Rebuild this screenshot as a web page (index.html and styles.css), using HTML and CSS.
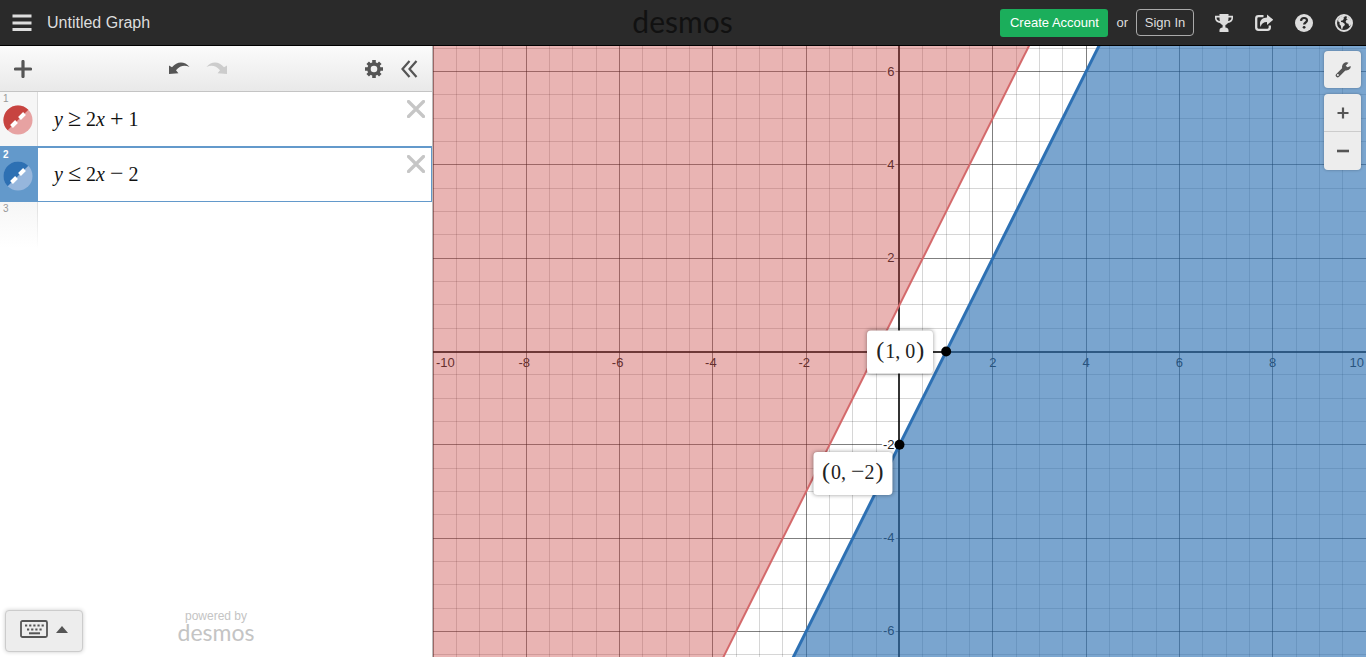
FILE: index.html
```
<!DOCTYPE html>
<html lang="en">
<head>
    <meta charset="UTF-8">
    <meta name="viewport" content="width=device-width, initial-scale=1.0">
    <title>Untitled Graph</title>
    <link rel="stylesheet" href="styles.css">
</head>
<body>
    <header class="header">
        <div class="header-left">
            <button type="button" class="icon-btn" aria-label="Menu">
                <svg width="20" height="18" viewBox="0 0 20 18"><path d="M.5 2h19M.5 9h19M.5 15.500h19" stroke="#ddd" stroke-width="2.800"/></svg>
            </button>
            <span class="graph-title">Untitled Graph</span>
        </div>
        <div class="logo">desmos</div>
        <div class="header-right">
            <button type="button" class="create-account">Create Account</button>
            <span class="or">or</span>
            <button type="button" class="sign-in">Sign In</button>
            <div class="header-icons">
                <button type="button" class="icon-btn" aria-label="Trophy">
                    <svg width="18" height="18" viewBox="0 0 18 18">
                        <path d="M4.500 0h9v1.800H18v2.400c0 2.600-2.200 4.300-5 4.700-.7 1.100-1.600 1.800-2.600 2.200v2.400c1.800.2 2.900 1 3.100 2.400V18h-9v-2.100c.2-1.400 1.300-2.200 3.100-2.400v-2.400C6.600 10.700 5.700 10 5 8.900 2.200 8.500 0 6.800 0 4.200V1.800h4.500z" fill="#ddd"/>
                        <path d="M1.600 3.400h2.900c0 1.400.1 2.700.4 3.700C3 6.700 1.600 5.700 1.600 4.200zM16.400 3.400h-2.900c0 1.400-.1 2.700-.4 3.700 1.900-.4 3.300-1.400 3.300-2.900z" fill="#2a2a2a"/>
                    </svg>
                </button>
                <button type="button" class="icon-btn" aria-label="Share">
                    <svg width="18" height="18" viewBox="0 0 18 18">
                        <path d="M8.500 2.200H3.500Q1.200 2.200 1.200 4.500v9Q1.200 15.800 3.500 15.800h9q2.300 0 2.300-2.300V11.500" fill="none" stroke="#ddd" stroke-width="2.300"/>
                        <path d="M12 .5l6.300 5.300L12 11V8C8.500 8 6.400 9.500 5.600 13 3.600 7.500 6.500 3.600 12 3.400z" fill="#ddd"/>
                    </svg>
                </button>
                <button type="button" class="icon-btn" aria-label="Help">
                    <svg width="18" height="18" viewBox="0 0 18 18">
                        <circle cx="9" cy="9" r="9" fill="#ddd"/>
                        <path d="M6 6.900C6.100 4.900 7.300 4 9 4c1.800 0 3 1 3 2.500 0 2-2.900 2-2.900 4.100" fill="none" stroke="#2a2a2a" stroke-width="2.200"/>
                        <circle cx="9.100" cy="13.300" r="1.400" fill="#2a2a2a"/>
                    </svg>
                </button>
                <button type="button" class="icon-btn" aria-label="Language">
                    <svg width="18" height="18" viewBox="0 0 18 18">
                        <circle cx="9" cy="9" r="8" fill="none" stroke="#ddd" stroke-width="2"/>
                        <path d="M3 5.500L5.500 2.500 9 1.500l1 1.300-1.700.9.700 1.100-1.500 1.700-1.600.3.200 1.200 1.600.3 2.200 1.700-.4 1.600-1.500 1.200-.7 2.300-1-.4-.5-3-1.300-1.500.1-1.900L3.300 7.500zM12 2.500l3 2 1.500 3.500-.8 3.200-1.600 1.100-.7-2.500-1.800-.5-1-1.700.9-1.500 1.500-.5-1.600-.7z" fill="#ddd"/>
                    </svg>
                </button>
            </div>
        </div>
    </header>

    <main class="main">
        <section class="panel">
            <div class="toolbar">
                <button type="button" class="icon-btn" aria-label="Add item">
                    <svg width="18" height="18" viewBox="0 0 18 18"><path d="M9 1.500v15M1.500 9h15" stroke="#555" stroke-width="3.200" stroke-linecap="round"/></svg>
                </button>
                <div class="history">
                    <button type="button" class="icon-btn" aria-label="Undo">
                        <svg width="21" height="13" viewBox="0 0 21 13"><path d="M0 3.500l3 1.800C8-.8 15.500-1 20.500 5 15.500 2.800 11 3.700 7 8.300l2.400 2.900L0 12z" fill="#555"/></svg>
                    </button>
                    <button type="button" class="icon-btn" aria-label="Redo" disabled>
                        <svg width="21" height="13" viewBox="0 0 21 13"><path d="M21 3.500l-3 1.800C13-.8 5.500-1 .5 5 5.500 2.800 10 3.700 14 8.300l-2.400 2.900L21 12z" fill="#ccc"/></svg>
                    </button>
                </div>
                <div class="toolbar-right">
                    <button type="button" class="icon-btn" aria-label="Settings">
                        <svg width="18" height="18" viewBox="0 0 18 18">
                            <g stroke="#555" stroke-width="3.600"><path d="M9 0v18M0 9h18M2.700 2.700l12.600 12.600M15.300 2.700L2.700 15.300"/></g>
                            <circle cx="9" cy="9" r="6.800" fill="#555"/>
                            <circle cx="9" cy="9" r="3.300" fill="#f0f0f0"/>
                        </svg>
                    </button>
                    <button type="button" class="icon-btn" aria-label="Hide list">
                        <svg width="17" height="18" viewBox="0 0 17 18"><path d="M8.500 1L1.500 9l7 8M15.500 1l-7 8 7 8" fill="none" stroke="#555" stroke-width="2.200"/></svg>
                    </button>
                </div>
            </div>

            <div class="row">
                <div class="tab">
                    <span class="num">1</span>
                    <button type="button" class="icon-btn swatch" aria-label="Hide expression 1">
                        <svg width="30" height="30" viewBox="0 0 30 30">
                            <circle cx="15" cy="15" r="14.500" fill="#e7a2a2"/>
                            <path d="M4.700 25.300A14.500 14.500 0 0 1 25.300 4.700z" fill="#c74440"/>
                            <path d="M8.500 21.500l5-5M16.500 13.500l5-5" stroke="#fff" stroke-width="4"/>
                        </svg>
                    </button>
                </div>
                <div class="math" contenteditable="true" role="textbox" aria-label="Expression 1"><i>y</i><span class="op">≥</span>2<i>x</i><span class="op">+</span>1</div>
                <button type="button" class="icon-btn close" aria-label="Delete expression 1">
                    <svg width="18" height="18" viewBox="0 0 18 18"><path d="M1.500 1.500l15 15M16.500 1.500l-15 15" stroke="#c6c6c6" stroke-width="3.200" stroke-linecap="round"/></svg>
                </button>
            </div>
            <div class="row selected">
                <div class="tab">
                    <span class="num">2</span>
                    <button type="button" class="icon-btn swatch" aria-label="Hide expression 2">
                        <svg width="30" height="30" viewBox="0 0 30 30">
                            <circle cx="15" cy="15" r="14.500" fill="#96b6dc"/>
                            <path d="M4.700 25.300A14.500 14.500 0 0 1 25.300 4.700z" fill="#2d70b3"/>
                            <path d="M8.500 21.500l5-5M16.500 13.500l5-5" stroke="#fff" stroke-width="4"/>
                        </svg>
                    </button>
                </div>
                <div class="math" contenteditable="true" role="textbox" aria-label="Expression 2"><i>y</i><span class="op">≤</span>2<i>x</i><span class="op">−</span>2</div>
                <button type="button" class="icon-btn close" aria-label="Delete expression 2">
                    <svg width="18" height="18" viewBox="0 0 18 18"><path d="M1.500 1.500l15 15M16.500 1.500l-15 15" stroke="#c6c6c6" stroke-width="3.200" stroke-linecap="round"/></svg>
                </button>
            </div>
            <div class="row empty">
                <div class="tab"><span class="num">3</span></div>
            </div>

            <div class="panel-footer">
                <button type="button" class="keypad" aria-label="Show keypad">
                    <svg width="28" height="18" viewBox="0 0 28 18">
                        <rect x="1" y="1" width="26" height="16" rx="1.500" fill="none" stroke="#555" stroke-width="1.800"/>
                        <path d="M5 5.500h19" stroke="#555" stroke-width="2.200" stroke-dasharray="2.200 1.950"/>
                        <path d="M7 9.500h15" stroke="#555" stroke-width="2.200" stroke-dasharray="2.200 1.950"/>
                        <path d="M9 13.300h11" stroke="#555" stroke-width="2"/>
                    </svg>
                    <svg width="12" height="7" viewBox="0 0 12 7"><path d="M6 0l6 7H0z" fill="#555"/></svg>
                </button>
                <div class="powered">
                    <span class="powered-by">powered by</span>
                    <span class="powered-logo">desmos</span>
                </div>
            </div>
        </section>

        <section class="graph" id="graph">
            <svg class="plot" id="plot" role="img" aria-label="Graph of y ≥ 2x + 1 and y ≤ 2x − 2"></svg>
            <div class="point-label label-left" id="label-1"><span class="paren">(</span>1<span class="comma">,</span>0<span class="paren">)</span></div>
            <div class="point-label label-below" id="label-2"><span class="paren">(</span>0<span class="comma">,</span><span class="minus">−</span>2<span class="paren">)</span></div>
            <div class="graph-tools">
                <button type="button" class="tool" aria-label="Graph settings">
                    <svg width="16" height="16" viewBox="0 0 16 16">
                        <path d="M2.700 13.300l7-7" stroke="#555" stroke-width="4" stroke-linecap="round"/>
                        <path d="M13.500.7A4.700 4.700 0 0 0 7 5.500 4.700 4.700 0 0 0 15.500 6l.2-2-3.200 1.200-1.800-1.400z" fill="#555"/>
                        <circle cx="2.900" cy="13.100" r="1" fill="#ededed"/>
                    </svg>
                </button>
                <div class="zoom">
                    <button type="button" class="tool" aria-label="Zoom in">
                        <svg width="12" height="12" viewBox="0 0 12 12"><path d="M6 .5v11M.5 6h11" stroke="#555" stroke-width="2.200"/></svg>
                    </button>
                    <button type="button" class="tool" aria-label="Zoom out">
                        <svg width="12" height="12" viewBox="0 0 12 12"><path d="M0 6h12" stroke="#555" stroke-width="2.600"/></svg>
                    </button>
                </div>
            </div>
        </section>
    </main>

    <script src="graph.js"></script>
</body>
</html>
```
FILE: styles.css
```
* {
    box-sizing: border-box;
}
body {
    font-family: "Liberation Sans", Arial, sans-serif;
    background-color: #fff;
    color: #444;
    display: flex;
    flex-direction: column;
    height: 100vh;
    margin: 0;
    overflow: hidden;
}
button {
    font-family: inherit;
    padding: 0;
    cursor: pointer;
}
svg {
    display: block;
}
.icon-btn {
    background: none;
    border: none;
}

/* header */
.header {
    background-color: #2a2a2a;
    border-bottom: 1px solid #000;
    color: #ddd;
    display: grid;
    grid-template-columns: 1fr auto 1fr;
    align-items: center;
    height: 46px;
    padding: 0 13px 0 12px;
    flex-shrink: 0;
}
.header-left {
    display: flex;
    align-items: center;
    gap: 15px;
}
.graph-title {
    font-size: 16px;
}
.logo {
    font-family: Lato, sans-serif;
    font-size: 30px;
    line-height: 36px;
    padding-bottom: 4px;
    color: #111;
}
.header-right {
    display: flex;
    align-items: center;
    justify-content: flex-end;
    gap: 8px;
    font-size: 13px;
}
.create-account {
    background-color: #1bae5b;
    color: #fff;
    border: none;
    border-radius: 3px;
    font-size: 13px;
    width: 108px;
    height: 28px;
}
.sign-in {
    background: none;
    color: #ddd;
    border: 1px solid #aaa;
    border-radius: 4px;
    font-size: 13px;
    width: 58px;
    height: 27px;
}
.header-icons {
    display: flex;
    gap: 22px;
    margin-left: 13px;
}

.main {
    display: flex;
    flex: 1;
    min-height: 0;
}

/* expression list */
.panel {
    display: flex;
    flex-direction: column;
    width: 433px;
    border-right: 1px solid #bbb;
    flex-shrink: 0;
}
.toolbar {
    background: linear-gradient(#fbfbfb, #e9e9e9);
    border-bottom: 1px solid #c4c4c4;
    display: grid;
    grid-template-columns: 1fr auto 1fr;
    align-items: center;
    height: 46px;
    padding: 0 14px;
}
.history {
    display: flex;
    gap: 16px;
    margin-right: 36px;
}
.toolbar-right {
    display: flex;
    justify-content: flex-end;
    gap: 18px;
}
.row {
    display: flex;
    height: 54px;
}
.tab {
    background-color: #f6f6f6;
    border-right: 1px solid #ddd;
    width: 38px;
    padding: 1px 3px;
}
.num {
    display: block;
    font-size: 10px;
    line-height: 12px;
    color: #999;
}
.swatch {
    display: block;
}
.math {
    flex: 1;
    padding-left: 16px;
    font-family: "Liberation Serif", "Times New Roman", serif;
    font-size: 20px;
    line-height: 54px;
    color: #111;
    outline: none;
}
.op {
    font-size: 24px;
    line-height: 20px;
    margin: 0 5px;
}
.close {
    align-self: flex-start;
    margin: 8px 7px 0 0;
}
.selected {
    height: 56px;
    border: 1px solid #6399cb;
    border-top-width: 2px;
    border-left: none;
}
.selected .tab {
    background-color: #6399cb;
    border-color: #6399cb;
}
.selected .num {
    color: #fff;
    font-weight: bold;
}
.selected .math {
    line-height: 52px;
}
.selected .close {
    margin: 7px 6px 0 0;
}
.empty {
    height: 46px;
}
.empty .tab {
    background: linear-gradient(#f6f6f6, #fff);
    border-right: 1px solid;
    border-image: linear-gradient(#ddd, #fff) 1;
}
.panel-footer {
    display: grid;
    grid-template-columns: 1fr auto 1fr;
    align-items: end;
    margin-top: auto;
    padding: 0 5px;
}
.keypad {
    display: flex;
    align-items: center;
    justify-content: center;
    gap: 8px;
    width: 78px;
    height: 42px;
    margin-bottom: 5px;
    padding-bottom: 4px;
    background-color: #ededed;
    border: 1px solid #ccc;
    border-radius: 4px;
    box-shadow: 0 0 4px rgba(0, 0, 0, 0.2);
}
.powered {
    display: flex;
    flex-direction: column;
    align-items: center;
    color: #c4c4c4;
    margin-bottom: 16px;
}
.powered-by {
    font-size: 12px;
    line-height: 14px;
}
.powered-logo {
    font-family: Lato, sans-serif;
    font-size: 23px;
    line-height: 18px;
}

/* graph paper */
.graph {
    position: relative;
    flex: 1;
    min-width: 0;
    overflow: hidden;
}
.plot {
    width: 100%;
    height: 100%;
}
.minor {
    stroke: rgba(0, 0, 0, 0.16);
}
.major {
    stroke: rgba(0, 0, 0, 0.5);
}
.axis {
    stroke: rgba(0, 0, 0, 0.8);
    stroke-width: 2;
}
.tick {
    font-size: 13px;
    fill: #222;
}
.tick-bg {
    stroke: #fff;
    stroke-width: 3;
    paint-order: stroke;
}
.red-area {
    fill: rgba(199, 68, 64, 0.4);
}
.red-line {
    stroke: #d4696b;
    stroke-width: 2;
}
.blue-area {
    fill: rgba(45, 112, 179, 0.63);
}
.blue-line {
    stroke: #2d70b3;
    stroke-width: 3;
}
.point-label {
    position: absolute;
    height: 43px;
    padding: 0 8px;
    background-color: #fff;
    border-radius: 4px;
    box-shadow: 0 0 4px rgba(0, 0, 0, 0.4);
    font-family: "Liberation Serif", "Times New Roman", serif;
    font-size: 20px;
    line-height: 38px;
    color: #222;
    white-space: nowrap;
}
.paren {
    font-size: 24px;
    margin: 0 1px;
}
.minus {
    font-size: 24px;
}
.comma {
    margin-right: 5px;
}
.label-left {
    transform: translate(-100%, -50%);
    margin-left: -13px;
}
.label-below {
    transform: translate(-100%, 0);
    margin: 7px 0 0 -7px;
}
.graph-tools {
    position: absolute;
    top: 5px;
    right: 5px;
    display: flex;
    flex-direction: column;
    gap: 6px;
}
.tool {
    display: flex;
    align-items: center;
    justify-content: center;
    width: 37px;
    height: 37px;
    background-color: #ededed;
    border: none;
    border-radius: 4px;
    box-shadow: 0 0 3px rgba(0, 0, 0, 0.3);
}
.zoom {
    border-radius: 4px;
    box-shadow: 0 0 3px rgba(0, 0, 0, 0.3);
}
.zoom .tool {
    height: 38px;
    box-shadow: none;
}
.zoom .tool:first-child {
    border-bottom: 1px solid #ccc;
    border-radius: 4px 4px 0 0;
}
.zoom .tool:last-child {
    border-radius: 0 0 4px 4px;
}
```
FILE: graph.js
```
const graph = document.getElementById('graph');
const plot = document.getElementById('plot');

function line(x1, y1, x2, y2, cls) {
    return `<line x1="${x1}" y1="${y1}" x2="${x2}" y2="${y2}" class="${cls}"/>`;
}

function draw() {
    const w = graph.clientWidth;
    const h = graph.clientHeight;
    const unit = w / 20;
    const px = x => w / 2 + x * unit;
    const py = y => h / 2 - y * unit;
    const snap = v => Math.floor(v) + 0.5;
    const maxY = Math.ceil(h / 2 / unit) + 1;
    let grid = '';
    let labels = '';

    // half-unit grid, every second unit is a major line
    for (let i = -20; i <= 20; i++) {
        if (i === 0) continue;
        const x = snap(px(i / 2));
        grid += line(x, 0, x, h, i % 4 === 0 ? 'major' : 'minor');
    }
    for (let i = -maxY * 2; i <= maxY * 2; i++) {
        if (i === 0) continue;
        const y = snap(py(i / 2));
        grid += line(0, y, w, y, i % 4 === 0 ? 'major' : 'minor');
    }
    grid += line(0, Math.round(py(0)), w, Math.round(py(0)), 'axis');
    grid += line(Math.floor(px(0)), 0, Math.floor(px(0)), h, 'axis');

    for (let x = -10; x <= 10; x += 2) {
        if (x === 0) continue;
        let anchor = 'middle';
        // the minus sign hangs to the left of the line
        let at = x < 0 ? px(x) - 2 : px(x);
        if (x === -10) { anchor = 'start'; at = 3; }
        if (x === 10) { anchor = 'end'; at = w - 2; }
        labels += `<text x="${at}" y="${py(0) + 15}" text-anchor="${anchor}" class="tick">${x}</text>`;
    }
    for (let y = -6; y <= 6; y += 2) {
        if (y === 0) continue;
        labels += `<text x="${px(0) - 5}" y="${py(y) + 4}" text-anchor="end" class="tick tick-bg">${y}</text>`;
    }

    // boundaries y = 2x + b, cut above and below the view
    const top = maxY;
    const edge = (y, b) => px((y - b) / 2);
    const red = [edge(top, 1), py(top), edge(-top, 1), py(-top)];
    const blue = [edge(top, -2), py(top), edge(-top, -2), py(-top)];

    plot.innerHTML = grid + labels +
        `<polygon class="red-area" points="0,${py(top)} ${red} 0,${py(-top)}"/>` +
        `<polygon class="blue-area" points="${w},${py(top)} ${blue} ${w},${py(-top)}"/>` +
        line(...red, 'red-line') + line(...blue, 'blue-line') +
        `<circle cx="${px(1)}" cy="${py(0)}" r="5"/>` +
        `<circle cx="${px(0)}" cy="${py(-2)}" r="5"/>`;

    place('label-1', px(1), py(0));
    place('label-2', px(0), py(-2));
}

function place(id, x, y) {
    const el = document.getElementById(id);
    el.style.left = x + 'px';
    el.style.top = y + 'px';
}

window.addEventListener('resize', draw);
draw();
```
